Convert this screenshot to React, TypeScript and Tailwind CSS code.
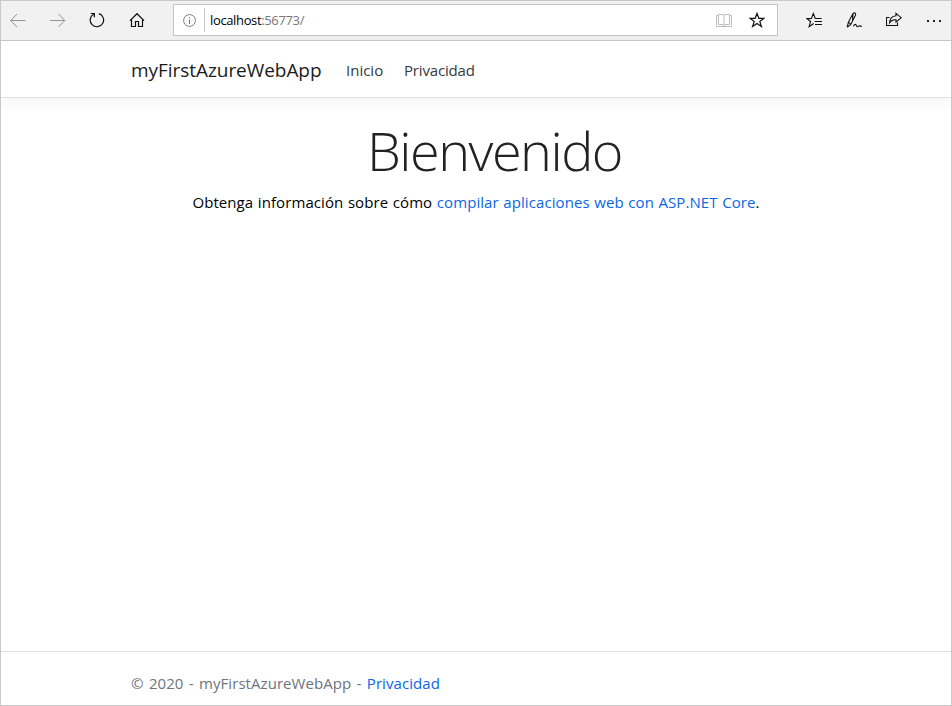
import React from "react";

const stroke = { fill: "none", stroke: "#111", strokeWidth: 1.1 };

function BrowserBar() {
  return (
    <header className="flex h-10 shrink-0 items-center border-b border-[#c8c8c8] bg-[#f1f1f1] pb-px">
      <svg className="ml-[9px] h-4 w-4 shrink-0" viewBox="0 0 16 16" fill="none" stroke="#929292">
        <path d="M0.8 8.5H15.5M7 2L0.7 8.5L7 15" />
      </svg>
      <svg className="ml-6 h-4 w-4 shrink-0" viewBox="0 0 16 16" fill="none" stroke="#929292">
        <path d="M0 8.5H14.7M8.5 2L14.8 8.5L8.5 15" />
      </svg>
      <svg className="ml-[23px] h-4 w-4 shrink-0" viewBox="0 0 16 16" {...stroke} strokeWidth={1.2}>
        <path d="M9.8 1.6A6.7 6.7 0 1 1 4.6 2.2M1.7 1.5H5.4V5.3" />
      </svg>
      <svg className="ml-6 h-4 w-4 shrink-0" viewBox="0 0 16 16" {...stroke} strokeWidth={1.2}>
        <path d="M1 8.6L8 1.7L15 8.6M2.5 7.5V14.5H6.5V9.5H9.5V14.5H13.5V7.5" />
      </svg>
      <div className="ml-7 flex h-8 w-[605px] shrink-0 items-center border border-[#c4c4c4] bg-white">
        <svg className="ml-[8px] h-3.5 w-3.5 shrink-0" viewBox="0 0 14 14" fill="none" stroke="#7c7c7c">
          <circle cx="7.5" cy="7.5" r="5.9" />
          <path d="M7.5 6.5V11M7.5 4V5.2" />
        </svg>
        <span className="ml-[8px] h-6 w-px bg-[#c8c8c8]" />
        <span className="mt-px ml-[5px] text-[13px] tracking-[-0.36px] text-[#777]">
          <span className="text-black">localhost</span>:56773/
        </span>
        <svg className="ml-auto h-4 w-4 shrink-0" viewBox="0 0 16 16" fill="none" stroke="#bebebe">
          <path d="M8 2.5V14.5M8 3.5L7 2.5H2.5V12.5H7L8 13.5L9 12.5H13.5V2.5H9L8 3.5M2.5 3.5H.5V14.5H15.5V3.5H13.5" />
        </svg>
        <svg className="mr-3 ml-[17px] h-4 w-4 shrink-0" viewBox="0 0 16 16" {...stroke} strokeWidth={1.2}>
          <path d="M8 1.4L9.8 6.3H15L10.8 9.4L12.4 14.5L8 11.4L3.6 14.5L5.2 9.4L1 6.3H6.2Z" />
        </svg>
      </div>
      <svg className="ml-7 h-4 w-4 shrink-0" viewBox="0 0 16 16" {...stroke}>
        <path d="M15.5 6.5H9.3L7.3 1.5L5.4 6.5H1L4.6 9.5L3.1 14.7L7.7 11.5M8.5 9.5H16M9 12.5H16" />
      </svg>
      <svg className="ml-6 h-4 w-4 shrink-0" viewBox="0 0 16 16" {...stroke}>
        <path d="M1.2 15.2L2.4 10.2L7 1.6Q8.2.3 9.2 1.2Q10 1.9 9.3 3.5L4.8 12.4L1.2 15.2M2.4 10.2L4.8 12.4M7 1.6L6.5 8.8M7.5 14.4Q8.5 11.8 9.6 12.5Q10.2 12.9 10.7 14.3Q11.4 15.4 12.5 14.2Q13.3 13.5 15.8 14.4" />
      </svg>
      <svg className="ml-6 h-4 w-4 shrink-0" viewBox="0 0 16 16" {...stroke}>
        <path d="M3.5 5.5H.5V13.5H11.5V10.5M10 1.3L15.2 5.7L10 10.1V7.8Q6 7.3 3.6 10.7Q4.2 4.3 10 3.8Z" />
      </svg>
      <span className="ml-[25px] flex gap-1 pt-px">
        <i className="h-0.5 w-0.5 bg-[#222]" />
        <i className="h-0.5 w-0.5 bg-[#222]" />
        <i className="h-0.5 w-0.5 bg-[#222]" />
      </span>
    </header>
  );
}

export default function App() {
  return (
    <div className="flex h-[706px] w-[952px] flex-col overflow-hidden border border-[#c8c8c8] bg-white font-['Open_Sans','Noto_Sans',sans-serif] font-[370] text-[#212529]">
      <BrowserBar />
      <nav className="flex h-[57px] shrink-0 items-center border-b border-[#dee2e6] pt-0.5 pl-[130px] shadow-[0_4px_12px_rgba(0,0,0,0.05)]">
        <a className="w-[191px] text-[19px] leading-[30px] tracking-[-0.05px] whitespace-nowrap text-[#1b1b1b]">myFirstAzureWebApp</a>
        <a className="ml-6 w-[38px] text-[15px] whitespace-nowrap text-[#343a40]">Inicio</a>
        <a className="ml-5 text-[15px] tracking-[-0.17px] whitespace-nowrap text-[#343a40]">Privacidad</a>
      </nav>
      <main className="flex grow flex-col items-center">
        <h1 className="mt-[19px] ml-[37px] text-[54px] leading-[67px] font-light tracking-[-1.5px] text-[#222]">Bienvenido</h1>
        <p className="mt-[6px] text-[15px] leading-6 tracking-[0.08px] [word-spacing:0.6px] whitespace-nowrap text-black">
          Obtenga información sobre cómo <a className="text-[#0b66e4]">compilar aplicaciones web con ASP.NET Core</a>.
        </p>
      </main>
      <footer className="h-[54px] shrink-0 border-t border-[#dee2e6] pt-[19px] pl-[130px] text-[15px] leading-6 tracking-[0.06px] [word-spacing:1.4px] whitespace-nowrap text-[#6c757d]">
        © 2020 - myFirstAzureWebApp - <a className="text-[#0b66e4]">Privacidad</a>
      </footer>
    </div>
  );
}
